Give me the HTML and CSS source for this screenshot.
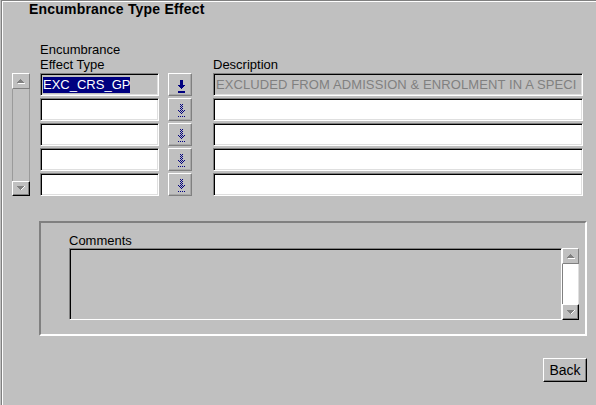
FILE: index.html
```html
<!DOCTYPE html>
<html lang="en">
<head>
<meta charset="utf-8">
<title>Encumbrance Type Effect</title>
<link rel="stylesheet" href="styles.css">
</head>
<body>
<div class="window">
  <h1 class="title">Encumbrance Type Effect</h1>

  <div class="block">
    <div class="vscroll">
      <div class="sb-btn up">
        <svg width="8" height="5" viewBox="0 0 8 5" shape-rendering="crispEdges"><rect x="3" y="0" width="1" height="1" fill="#808080"/><rect x="2" y="1" width="3" height="1" fill="#808080"/><rect x="1" y="2" width="5" height="1" fill="#808080"/><rect x="0" y="3" width="7" height="1" fill="#808080"/><rect x="1" y="4" width="7" height="1" fill="#fff"/></svg>
      </div>
      <div class="sb-track"></div>
      <div class="sb-btn down">
        <svg width="8" height="5" viewBox="0 0 8 5" shape-rendering="crispEdges"><rect x="0" y="0" width="7" height="1" fill="#808080"/><rect x="1" y="1" width="5" height="1" fill="#808080"/><rect x="2" y="2" width="3" height="1" fill="#808080"/><rect x="3" y="3" width="1" height="1" fill="#808080"/><rect x="7" y="0" width="1" height="1" fill="#fff"/><rect x="6" y="1" width="1" height="1" fill="#fff"/><rect x="5" y="2" width="1" height="1" fill="#fff"/><rect x="4" y="3" width="1" height="1" fill="#fff"/></svg>
      </div>
    </div>

    <div class="col col-type">
      <div class="label">Encumbrance<br>Effect Type</div>
      <div class="field query"><span class="sel">EXC_CRS_GP</span></div>
      <div class="field"></div>
      <div class="field"></div>
      <div class="field"></div>
      <div class="field"></div>
    </div>

    <div class="col col-btn">
      <button class="lov" type="button" aria-label="List of values">
        <svg width="22" height="21" viewBox="0 0 22 21" shape-rendering="crispEdges"><g fill="#000080"><rect x="11" y="6" width="3" height="5"/><rect x="9" y="11" width="7" height="1"/><rect x="10" y="12" width="5" height="1"/><rect x="11" y="13" width="3" height="1"/><rect x="12" y="14" width="1" height="1"/><rect x="9" y="17" width="7" height="2"/></g></svg>
      </button>
      <button class="lov" type="button" aria-label="List of values">
        <svg width="22" height="21" viewBox="0 0 22 21" shape-rendering="crispEdges"><path fill="#000080" d="M11 5h1v1h-1zM13 5h1v1h-1zM12 6h1v1h-1zM11 7h1v1h-1zM13 7h1v1h-1zM12 8h1v1h-1zM11 9h1v1h-1zM13 9h1v1h-1zM12 10h1v1h-1zM9 11h1v1h-1zM11 11h1v1h-1zM13 11h1v1h-1zM15 11h1v1h-1zM10 12h1v1h-1zM12 12h1v1h-1zM14 12h1v1h-1zM11 13h1v1h-1zM13 13h1v1h-1zM12 14h1v1h-1zM9 17h1v1h-1zM11 17h1v1h-1zM13 17h1v1h-1zM15 17h1v1h-1z"/></svg>
      </button>
      <button class="lov" type="button" aria-label="List of values">
        <svg width="22" height="21" viewBox="0 0 22 21" shape-rendering="crispEdges"><path fill="#000080" d="M11 5h1v1h-1zM13 5h1v1h-1zM12 6h1v1h-1zM11 7h1v1h-1zM13 7h1v1h-1zM12 8h1v1h-1zM11 9h1v1h-1zM13 9h1v1h-1zM12 10h1v1h-1zM9 11h1v1h-1zM11 11h1v1h-1zM13 11h1v1h-1zM15 11h1v1h-1zM10 12h1v1h-1zM12 12h1v1h-1zM14 12h1v1h-1zM11 13h1v1h-1zM13 13h1v1h-1zM12 14h1v1h-1zM9 17h1v1h-1zM11 17h1v1h-1zM13 17h1v1h-1zM15 17h1v1h-1z"/></svg>
      </button>
      <button class="lov" type="button" aria-label="List of values">
        <svg width="22" height="21" viewBox="0 0 22 21" shape-rendering="crispEdges"><path fill="#000080" d="M11 5h1v1h-1zM13 5h1v1h-1zM12 6h1v1h-1zM11 7h1v1h-1zM13 7h1v1h-1zM12 8h1v1h-1zM11 9h1v1h-1zM13 9h1v1h-1zM12 10h1v1h-1zM9 11h1v1h-1zM11 11h1v1h-1zM13 11h1v1h-1zM15 11h1v1h-1zM10 12h1v1h-1zM12 12h1v1h-1zM14 12h1v1h-1zM11 13h1v1h-1zM13 13h1v1h-1zM12 14h1v1h-1zM9 17h1v1h-1zM11 17h1v1h-1zM13 17h1v1h-1zM15 17h1v1h-1z"/></svg>
      </button>
      <button class="lov" type="button" aria-label="List of values">
        <svg width="22" height="21" viewBox="0 0 22 21" shape-rendering="crispEdges"><path fill="#000080" d="M11 5h1v1h-1zM13 5h1v1h-1zM12 6h1v1h-1zM11 7h1v1h-1zM13 7h1v1h-1zM12 8h1v1h-1zM11 9h1v1h-1zM13 9h1v1h-1zM12 10h1v1h-1zM9 11h1v1h-1zM11 11h1v1h-1zM13 11h1v1h-1zM15 11h1v1h-1zM10 12h1v1h-1zM12 12h1v1h-1zM14 12h1v1h-1zM11 13h1v1h-1zM13 13h1v1h-1zM12 14h1v1h-1zM9 17h1v1h-1zM11 17h1v1h-1zM13 17h1v1h-1zM15 17h1v1h-1z"/></svg>
      </button>
    </div>

    <div class="col col-desc">
      <div class="label">Description</div>
      <div class="field query muted">EXCLUDED FROM ADMISSION &amp; ENROLMENT IN A SPECI</div>
      <div class="field"></div>
      <div class="field"></div>
      <div class="field"></div>
      <div class="field"></div>
    </div>
  </div>

  <div class="lower">
    <div class="group">
      <div class="label">Comments</div>
      <div class="ta">
        <div class="ta-body"></div>
        <div class="ta-scroll">
          <div class="sb-btn up">
            <svg width="8" height="5" viewBox="0 0 8 5" shape-rendering="crispEdges"><rect x="3" y="0" width="1" height="1" fill="#808080"/><rect x="2" y="1" width="3" height="1" fill="#808080"/><rect x="1" y="2" width="5" height="1" fill="#808080"/><rect x="0" y="3" width="7" height="1" fill="#808080"/><rect x="1" y="4" width="7" height="1" fill="#fff"/></svg>
          </div>
          <div class="ta-track"></div>
          <div class="sb-btn down">
            <svg width="8" height="5" viewBox="0 0 8 5" shape-rendering="crispEdges"><rect x="0" y="0" width="7" height="1" fill="#808080"/><rect x="1" y="1" width="5" height="1" fill="#808080"/><rect x="2" y="2" width="3" height="1" fill="#808080"/><rect x="3" y="3" width="1" height="1" fill="#808080"/><rect x="7" y="0" width="1" height="1" fill="#fff"/><rect x="6" y="1" width="1" height="1" fill="#fff"/><rect x="5" y="2" width="1" height="1" fill="#fff"/><rect x="4" y="3" width="1" height="1" fill="#fff"/></svg>
          </div>
        </div>
      </div>
    </div>
    <div class="actions">
      <button class="btn" type="button">Back</button>
    </div>
  </div>
</div>
</body>
</html>
```

FILE: styles.css
```css
* { box-sizing: border-box; }

html, body { margin: 0; padding: 0; }

body {
  width: 596px;
  height: 405px;
  overflow: hidden;
  background: #c0c0c0;
  color: #000;
  font-family: "Liberation Sans", Arial, sans-serif;
  font-size: 13px;
}

.window {
  margin-left: 1px;
  height: 420px;
  width: 620px;
  border-top: 1px solid #808080;
  border-left: 1px solid #808080;
  box-shadow: inset 1px 1px #fff;
  padding-left: 10px;
}

.title {
  margin: 0;
  padding-left: 17px;
  font-size: 14px;
  font-weight: bold;
  line-height: 16px;
  letter-spacing: 0.2px;
}

.block {
  display: flex;
  align-items: flex-end;
  margin-top: 25px;
}

.vscroll {
  width: 18px;
  height: 123px;
  display: flex;
  flex-direction: column;
}

.sb-btn {
  flex: none;
  height: 16px;
  background: #c0c0c0;
  border: 1px solid;
  border-color: #fff #808080 #808080 #fff;
  display: flex;
  align-items: center;
  justify-content: center;
}

.sb-btn svg { display: block; }

.sb-btn.down {
  height: 15px;
  border-color: #fff #000 #000 #fff;
  box-shadow: inset -1px -1px #808080;
}

.sb-track {
  flex: 1;
  border-left: 1px solid #9a9a9a;
  border-right: 1px solid #9a9a9a;
}

.col {
  display: flex;
  flex-direction: column;
  gap: 2px;
}

.col-type { width: 119px; margin-left: 10px; }
.col-btn { width: 24px; margin-left: 9px; }
.col-desc { width: 370px; margin-left: 21px; }

.label {
  line-height: 15px;
  margin-bottom: -1px;
}

.field {
  height: 23px;
  background: #fff;
  border: 1px solid;
  border-color: #808080 #fff #fff #808080;
  box-shadow: inset 1px 1px #000, inset -1px -1px #dfdfdf;
  padding: 3px 2px 0;
  line-height: 16px;
  white-space: nowrap;
  overflow: hidden;
}

.field.query { background: #c0c0c0; }
.field.muted { color: #808080; letter-spacing: 0.1px; }

.sel {
  display: inline-block;
  background: #000080;
  color: #fff;
}

.lov {
  display: block;
  width: 24px;
  height: 23px;
  padding: 0;
  margin: 0;
  background: #c0c0c0;
  border: 1px solid;
  border-color: #fff #808080 #808080 #fff;
  box-shadow: inset -1px -1px #a8a8a8;
}

.lov svg { display: block; }

.lower {
  width: 548px;
  margin-left: 27px;
  margin-top: 25px;
}

.group {
  height: 115px;
  border: 2px solid;
  border-color: #808080 #fff #fff #808080;
  padding: 11px 0 0 28px;
}

.group .label {
  line-height: 14px;
  margin: 0;
}

.ta {
  display: flex;
  width: 510px;
  height: 72px;
}

.ta-body {
  flex: 1;
  border: 1px solid;
  border-color: #808080 #fff #fff #808080;
  box-shadow: inset 1px 1px #000;
}

.ta-scroll {
  width: 17px;
  display: flex;
  flex-direction: column;
}

.ta-scroll .sb-btn { height: 16px; }

.ta-track {
  flex: 1;
  background: #fff;
  border-left: 1px solid #808080;
  border-right: 1px solid #dfdfdf;
}

.actions {
  display: flex;
  justify-content: flex-end;
  margin-top: 22px;
}

.btn {
  width: 44px;
  height: 24px;
  padding: 0;
  margin: 0;
  font-family: "Liberation Sans", Arial, sans-serif;
  font-size: 14px;
  color: #000;
  background: #c0c0c0;
  border: 1px solid;
  border-color: #fff #000 #000 #fff;
  box-shadow: inset -1px -1px #808080;
}
```
